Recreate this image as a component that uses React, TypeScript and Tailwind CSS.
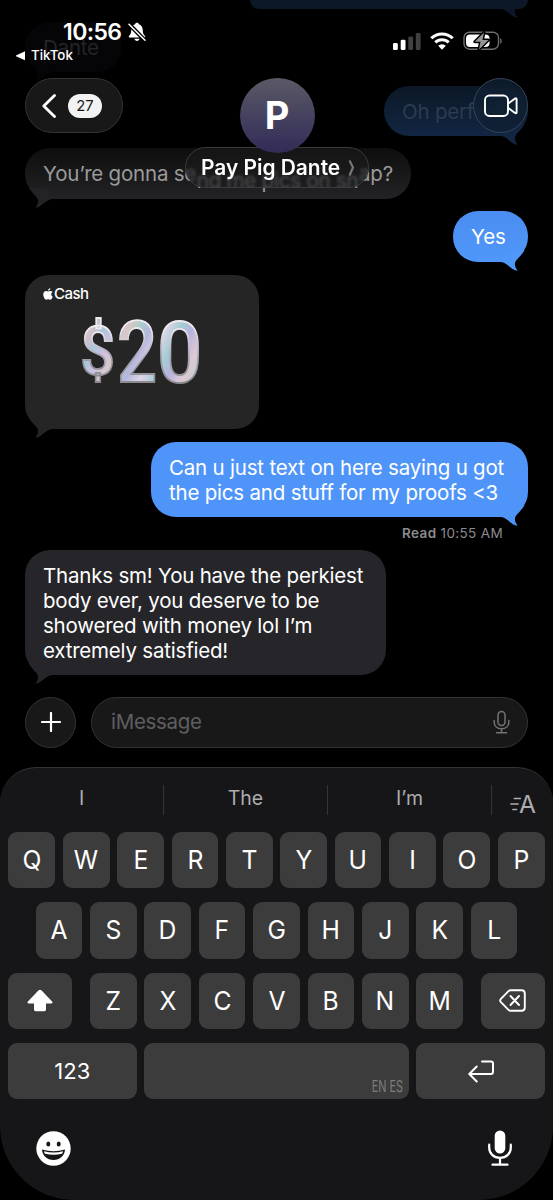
import { FC, ReactNode } from "react";

type Side = "left" | "right";

const LETTERS_TOP = "QWERTYUIOP".split("");
const LETTERS_MIDDLE = "ASDFGHJKL".split("");
const LETTERS_BOTTOM = "ZXCVBNM".split("");

const Bubble: FC<{
  side?: Side;
  className: string;
  tail: string;
  children?: ReactNode;
}> = ({ side = "left", className, tail, children }) => (
  <div className={`relative shrink-0 text-[20.5px] leading-[25px] tracking-[-0.205px] whitespace-nowrap ${side === "right" ? "self-end" : "self-start"} ${className}`}>
    <svg
      viewBox="0 0 30 24"
      className={`absolute -bottom-[10px] h-6 w-[30px] ${side === "right" ? "right-0" : "left-0 -scale-x-100"} ${tail}`}
      fill="currentColor"
    >
      <path d="M3 14C9 14.3 13 22.3 19.7 22.7C17.5 20 16.6 17.5 17 15C17.8 11.5 23 8.500 26.500 2L8 4Z" />
    </svg>
    <div className="relative">{children}</div>
  </div>
);

const BellSlashIcon: FC = () => (
  <svg viewBox="0 0 18 20" className="h-5 w-[18px]">
    <path
      d="M9 .8c-1 0-1.700.6-1.900 1.400C4.600 3 3.300 5.200 3.300 7.800c0 4-1.200 4.800-2.300 6.200-.5.8-.2 1.600.7 1.600h14.600c.9 0 1.200-.8.7-1.600-1.100-1.400-2.300-2.200-2.300-6.200 0-2.600-1.300-4.800-3.800-5.600C10.700 1.400 10 .8 9 .8zM6.500 16.700c.2 1.300 1.200 2.200 2.500 2.200s2.300-.9 2.500-2.200z"
      fill="#fff"
    />
    <path d="M1.500 2.500 16.500 18" stroke="#000" strokeWidth="4" />
    <path d="M1 2.200 17 18.300" stroke="#fff" strokeWidth="1.500" strokeLinecap="round" />
  </svg>
);

const SignalIcon: FC = () => (
  <svg viewBox="0 0 28 18" className="h-[18px] w-7" fill="#fff">
    <rect x="0" y="11" width="4.800" height="7" rx="1.300" />
    <rect x="7.700" y="7.800" width="4.800" height="10.200" rx="1.300" />
    <rect x="15.300" y="4.400" width="4.800" height="13.600" rx="1.300" opacity=".25" />
    <rect x="22.800" y="1" width="4.800" height="17" rx="1.300" opacity=".25" />
  </svg>
);

const WifiIcon: FC = () => (
  <svg viewBox="0 0 24 18" className="h-[18px] w-6" fill="none" stroke="#fff" strokeWidth="3">
    <path d="M1.300 6.300a15.200 15.200 0 0 1 21.400 0" />
    <path d="M5.300 10.400a9.500 9.500 0 0 1 13.400 0" />
    <path d="M12 17.700 8.200 13.800a5.400 5.400 0 0 1 7.600 0z" fill="#fff" stroke="none" />
  </svg>
);

const BatteryIcon: FC = () => (
  <svg viewBox="0 0 40 20" className="h-5 w-10">
    <rect x="1" y="1.200" width="34.500" height="17" rx="5.500" fill="none" stroke="#6f6f6f" strokeWidth="1.400" />
    <path d="M37.300 7v6c1.800-.7 1.800-5.300 0-6z" fill="#7b7b7b" />
    <rect x="3" y="3.500" width="23.500" height="12.500" rx="4" fill="#fff" />
    <path d="M21 1.500 11.800 10.700h5.700L16 18.500 25.500 9h-6z" fill="#8d8d8d" stroke="#000" strokeWidth="3" strokeLinejoin="round" />
    <path d="M21 1.500 11.800 10.700h5.700L16 18.500 25.500 9h-6z" fill="#949494" />
  </svg>
);

const StatusBar: FC = () => (
  <div className="flex h-[78px] justify-between pt-5">
    <div className="pl-4">
      <div className="flex h-[24px] items-center pl-[47px]">
        <span className="w-[61px] text-[23px] font-semibold tracking-[-0.6px] whitespace-nowrap">10:56</span>
        <span className="ml-1">
          <BellSlashIcon />
        </span>
      </div>
      <div className="flex h-[23px] items-center gap-[5px]">
        <svg viewBox="0 0 10 10" className="size-[10px]" fill="#fff">
          <path d="M0 4.500 9 .3v8.900L0 5.300z" />
        </svg>
        <span className="text-[13.3px] font-medium">TikTok</span>
      </div>
    </div>
    <div className="flex h-5 items-center gap-[9px] pt-[21px] pr-[50px]">
      <SignalIcon />
      <WifiIcon />
      <BatteryIcon />
    </div>
  </div>
);

const Header: FC = () => (
  <header className="absolute inset-x-0 top-0">
    <StatusBar />
    <div className="flex items-start px-[25px]">
      <div className="flex h-[55px] w-[98px] items-center justify-between rounded-full border border-[#343434] bg-[#181818] pr-5 pl-4">
        <svg viewBox="0 0 14 24" className="h-6 w-[14px]" fill="none" stroke="#fff" strokeWidth="2.800" strokeLinecap="round" strokeLinejoin="round">
          <path d="M12.500 1.500 1.800 12l10.700 10.500" />
        </svg>
        <span className="flex h-6 w-[34px] items-center justify-center rounded-full bg-[#f2f2f2] pt-px text-[14.8px] text-[#181818]">27</span>
      </div>
      <div className="ml-[62px] flex w-[184px] flex-col items-center">
        <div className="relative z-10 flex size-[75px] items-center justify-center rounded-full bg-linear-to-b from-[#5b5966] to-[#322b57] text-[38px] font-bold">P</div>
        <div className="-mt-[6px] flex h-[41px] w-[184px] items-center rounded-full border border-[#3b3b3c] bg-[#1b1b1c]/60 pl-[15px] backdrop-blur-[1.5px]">
          <span className="w-[142px] text-[20.9px] font-semibold whitespace-nowrap">Pay Pig Dante</span>
          <svg viewBox="0 0 8 16" className="ml-[5px] h-4 w-2" fill="none" stroke="#777" strokeWidth="2.200">
            <path d="M1.500.5 5 7.500 1.500 15.500" />
          </svg>
        </div>
      </div>
      <div className="ml-auto flex size-[55px] items-center justify-center rounded-full border border-[#34455a] bg-[#102033]/80 backdrop-blur-[2px]">
        <svg viewBox="0 0 34 24" className="h-6 w-[34px]" fill="none" stroke="#fff" strokeWidth="1.900" strokeLinejoin="round">
          <rect x="1" y="1.500" width="23" height="20.500" rx="4.500" />
          <path d="M24.300 9.500 31 4.600q1.600-.8 1.600.7v13q0 1.500-1.600.7l-6.700-5" />
        </svg>
      </div>
    </div>
  </header>
);

const AppleLogo: FC = () => (
  <svg viewBox="0 0 20 24" className="h-3 w-[10px]" fill="#fff">
    <path d="M16.500 12.700c0-2.300 1.200-3.600 2.600-4.600-1.200-1.700-3-2.300-4.500-2.300-2 0-3.300 1.100-4.300 1.100S7.800 5.800 6 5.800C3.200 5.900.5 8.200.5 12.600.5 17.800 3.900 23.500 6.400 23.500c1.500 0 2.200-1 4-1s2.300 1 3.900 1c2.500 0 4.500-3.900 5.200-6-2-.8-3-2.600-3-4.800zM13.200 4.200C14.300 3 14.800 1.600 14.600.3c-2.500.3-4.700 2.500-4.400 5.200 1.200 0 2.200-.5 3-1.300z" />
  </svg>
);

const CashAmount: FC = () => (
  <svg viewBox="0 0 126 116" className="absolute top-[20px] left-[54px] h-[116px] w-[126px] font-[Roboto] font-medium">
    <defs>
      <linearGradient id="foil" x1="0" y1="26" x2="120" y2="86" gradientUnits="userSpaceOnUse">
        <stop offset="0" stopColor="#ded5dc" />
        <stop offset=".1" stopColor="#d9bfc6" />
        <stop offset=".18" stopColor="#a9c6d8" />
        <stop offset=".27" stopColor="#cfc0e4" />
        <stop offset=".36" stopColor="#d8c8c4" />
        <stop offset=".42" stopColor="#a9cfc8" />
        <stop offset=".5" stopColor="#b4b6dc" />
        <stop offset=".6" stopColor="#e0d4e8" />
        <stop offset=".7" stopColor="#a3cdd3" />
        <stop offset=".78" stopColor="#b9b3e0" />
        <stop offset=".88" stopColor="#dfc9d2" />
        <stop offset="1" stopColor="#b9cdd2" />
      </linearGradient>
      <linearGradient id="edge" x1="0" y1="0" x2="0" y2="1">
        <stop offset=".25" stopColor="#efeaf0" />
        <stop offset=".55" stopColor="#a5a3b2" />
        <stop offset=".8" stopColor="#8b8a8d" />
      </linearGradient>
    </defs>
    <g fill="url(#foil)" stroke="url(#edge)" strokeWidth="1.800">
      <text x="1" y="80" fontSize="69" textLength="35" lengthAdjust="spacingAndGlyphs">$</text>
      <text x="38" y="86.500" fontSize="85" textLength="40" lengthAdjust="spacingAndGlyphs">2</text>
      <text x="78" y="86.500" fontSize="85" textLength="45" lengthAdjust="spacingAndGlyphs">0</text>
    </g>
  </svg>
);

const Transcript: FC = () => (
  <main className="flex h-[675px] flex-col overflow-visible px-[25px]">
    <Bubble side="right" className="h-[9px] w-[278px] rounded-b-[25px] bg-[#0c1827]" tail="text-[#0c1827]" />
    <Bubble className="mt-[13px] h-[50px] w-[97px] rounded-[25px] bg-[#050507] px-[18px] py-[13px] text-[#242426]" tail="text-[#050507]">
      Dante
    </Bubble>
    <Bubble side="right" className="mt-[14px] h-[50px] w-[144px] rounded-[25px] bg-linear-to-b from-[#0c1826] to-[#122643] px-[18px] py-[13px] text-[#2d3b4f]" tail="text-[#122643]">
      Oh perfect
    </Bubble>
    <Bubble className="mt-3 h-[51px] w-[386px] rounded-[25px] bg-linear-to-b from-[#0e0e0f] to-[#232325] px-[18px] py-[13px] text-[#9a9a9c]" tail="text-[#232325]">
      <div className="flex justify-between">
        <span>You’re gonna se</span>
        {/* the glass name pill bends this part of the line downwards */}
        <span className="translate-y-[7px]">nd me pics on sn</span>
        <span>ap?</span>
      </div>
    </Bubble>
    <Bubble side="right" className="mt-3 h-[51px] w-[75px] rounded-[25px] bg-linear-to-b from-[#4b8df0] to-[#5097fa] px-[18px] py-[13px]" tail="text-[#5097fa]">
      Yes
    </Bubble>
    <Bubble className="mt-[13px] h-[154px] w-[234px] rounded-[24px] bg-[#252525]" tail="text-[#252525]">
      <div className="flex items-center gap-[1px] pt-[10px] pl-[18px] text-[15px] leading-[18px] font-medium tracking-[-0.5px]">
        <AppleLogo />
        <span>Cash</span>
      </div>
      <CashAmount />
    </Bubble>
    <Bubble side="right" className="mt-[13px] h-[75px] w-[377px] rounded-[25px] bg-[#4f95f9] px-[18px] py-[13px]" tail="text-[#4f95f9]">
      <div>Can u just text on here saying u got</div>
      <div>the pics and stuff for my proofs &lt;3</div>
    </Bubble>
    <div className="mt-[7px] mr-[25px] h-[18px] self-end text-[13.500px] leading-[18px] tracking-[0.35px] text-[#8b8b90]">
      <span className="font-semibold">Read</span> 10:55 AM
    </div>
    <Bubble className="mt-[8px] h-[125px] w-[361px] rounded-[25px] bg-[#26262a] px-[18px] py-[13px]" tail="text-[#26262a]">
      <div>Thanks sm! You have the perkiest</div>
      <div>body ever, you deserve to be</div>
      <div>showered with money lol I’m</div>
      <div>extremely satisfied!</div>
    </Bubble>
  </main>
);

const Composer: FC = () => (
  <div className="mt-[21.500px] flex h-[51px] gap-[15px] px-[25px]">
    <div className="flex w-[51px] items-center justify-center rounded-full border border-[#333] bg-[#181818]">
      <svg viewBox="0 0 20 20" className="size-5" stroke="#fff" strokeWidth="2.200" strokeLinecap="round">
        <path d="M10 1v18M1 10h18" />
      </svg>
    </div>
    <div className="flex flex-1 items-center justify-between rounded-full border border-[#333] bg-[#181818] pr-[17px] pl-[19px]">
      <span className="text-[20.500px] tracking-[-0.3px] text-[#5f5f62]">iMessage</span>
      <svg viewBox="0 0 17 24" className="h-6 w-[17px]" fill="none" stroke="#737375" strokeWidth="1.500" strokeLinecap="round">
        <rect x="5" y="1.500" width="7" height="14" rx="3.500" />
        <path d="M1.200 10.500v1.700c0 4 3 6.500 7.300 6.500s7.300-2.500 7.300-6.500v-1.700M8.500 18.700v4M3.500 22.700h10" />
      </svg>
    </div>
  </div>
);

const Key: FC<{ className?: string; children?: ReactNode }> = ({ className = "w-[46.700px]", children }) => (
  <div className={`flex h-[56.300px] shrink-0 items-center justify-center rounded-[9px] bg-[#3c3c3c] text-[26px] ${className}`}>
    {children}
  </div>
);

const Letters: FC<{ letters: string[] }> = ({ letters }) => (
  <div className="flex gap-[7.700px]">
    {letters.map((letter) => (
      <Key key={letter}>
        <span className="-mt-px scale-x-95">{letter}</span>
      </Key>
    ))}
  </div>
);

const Suggestions: FC = () => (
  <div className="flex h-[64px] items-center text-[19.500px] text-[#adadaf]">
    <span className="w-[163px] pb-0.5 text-center">I</span>
    <i className="h-[30px] w-px bg-[#343436]" />
    <span className="w-[163px] pb-0.5 text-center">The</span>
    <i className="h-[30px] w-px bg-[#343436]" />
    <span className="w-[163px] pb-0.5 text-center">I’m</span>
    <i className="h-[30px] w-px bg-[#343436]" />
    <span className="flex flex-1 items-center pt-2 pl-[18px]">
      <svg viewBox="0 0 11 16" className="-mr-[2px] h-4 w-[11px]" stroke="currentColor" strokeWidth="1.700" strokeLinecap="round">
        <path d="M4.500 2.500h5.800M1 8h7M3 13.500h3.500" />
      </svg>
      <span className="text-[24.500px] leading-6">A</span>
    </span>
  </div>
);

const Keyboard: FC = () => (
  <section className="mt-[19.500px] h-[433px] rounded-t-[36px] rounded-b-[74px] border-t border-[#333] bg-[#161618]">
    <Suggestions />
    <div className="flex flex-col items-center gap-[14px]">
      <Letters letters={LETTERS_TOP} />
      <Letters letters={LETTERS_MIDDLE} />
      <div className="flex gap-[18px]">
        <Key className="w-[64px]">
          <svg viewBox="0 0 26 23" className="h-[23px] w-[26px]" fill="#fff">
            <path d="M11.600 1.300q1.400-1.300 2.800 0l10.700 11.200q1.300 1.700-.8 1.900H19v6q0 1.900-2 1.900H9q-2 0-2-1.900v-6H1.700q-2.100-.2-.8-1.900z" />
          </svg>
        </Key>
        <Letters letters={LETTERS_BOTTOM} />
        <Key className="w-[64px]">
          <svg viewBox="0 0 27 23" className="h-[23px] w-[27px]" fill="none" stroke="#fff" strokeWidth="1.900" strokeLinecap="round" strokeLinejoin="round">
            <path d="M11.500 1.200H22.500q3.300 0 3.300 3.300v14q0 3.300-3.300 3.300H11.500q-1.200 0-2-.9l-7.600-7.700q-1.500-1.700 0-3.400l7.600-7.700q.8-.9 2-.9zM11.500 7l8.500 9M20 7l-8.500 9" />
          </svg>
        </Key>
      </div>
      <div className="flex gap-[7.700px]">
        <Key className="w-[128.500px]">
          <span className="text-[22px]">123</span>
        </Key>
        <Key className="w-[264.500px] items-end justify-end! pr-[6px] pb-1">
          <span className="origin-right scale-x-[0.68] self-end text-[16px] leading-[18px] text-[#7d7d7f]">EN ES</span>
        </Key>
        <Key className="w-[128.500px]">
          <svg viewBox="0 0 26 23" className="h-[23px] w-[26px]" fill="none" stroke="#fff" strokeWidth="2" strokeLinecap="round" strokeLinejoin="round">
            <path d="M14 1.500h9q2 0 2 2v8q0 2.500-2 2.500H1.500M8.700 6.500 1.300 14l7.400 7.500" />
          </svg>
        </Key>
      </div>
    </div>
    <div className="flex items-center justify-between pt-[31px] pr-[41px] pl-9">
      <svg viewBox="0 0 35 35" className="size-[35px]">
        <circle cx="17.500" cy="17.500" r="17.200" fill="#fff" />
        <ellipse cx="12.300" cy="13" rx="2" ry="2.600" fill="#161618" />
        <ellipse cx="22.700" cy="13" rx="2" ry="2.600" fill="#161618" />
        <path d="M6 18.500q11.500 3.300 23 0c-.4 6-5 10.500-11.500 10.500S6.400 24.500 6 18.500z" fill="#161618" />
        <path d="M8 20.200q9.500 2.400 19 0-.2 1.500-1 2.500-8.500 2-17 0-.8-1-1-2.500z" fill="#fff" />
      </svg>
      <svg viewBox="0 0 24 36" className="h-9 w-6" fill="none" stroke="#fff" strokeWidth="2.200" strokeLinecap="round">
        <rect x="6.700" y=".5" width="10.600" height="23" rx="5.300" fill="#fff" stroke="none" />
        <path d="M1.200 14.500v3c0 6 4.400 10.300 10.800 10.300s10.800-4.300 10.800-10.300v-3M12 28v6.500M4.500 34.700h15" />
      </svg>
    </div>
  </section>
);

const App: FC = () => (
  <div className="relative h-[1200px] w-[553px] overflow-hidden bg-black font-[Inter,sans-serif] text-white">
    <Transcript />
    <Composer />
    <Keyboard />
    <Header />
  </div>
);

export default App;
